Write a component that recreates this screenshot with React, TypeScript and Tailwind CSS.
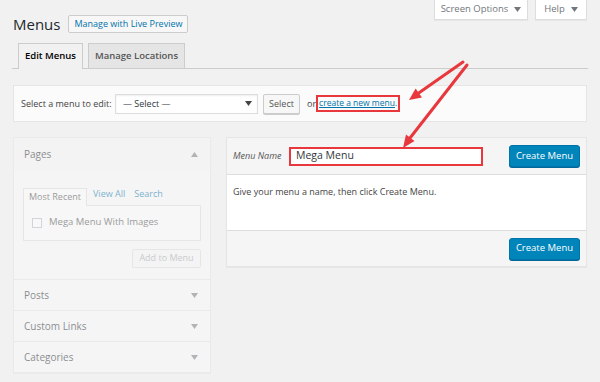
import { ReactNode } from "react";

function Caret({ up = false, className = "" }: { up?: boolean; className?: string }) {
  return (
    <svg width="7" height="5" viewBox="0 0 7 5" className={className}>
      {up ? <path d="M0 5 L3.5 0 L7 5 Z" fill="currentColor" /> : <path d="M0 0 L7 0 L3.5 5 Z" fill="currentColor" />}
    </svg>
  );
}

function MetaTab({ children, w }: { children: ReactNode; w: string }) {
  return (
    <div
      className={`flex h-[20px] ${w} items-center justify-center gap-[6px] border border-t-0 border-[#ddd] bg-white text-[9.5px] text-[#72777c] shadow-[0_1px_1px_rgba(0,0,0,0.04)]`}
    >
      {children}
    </div>
  );
}

function AccordionRow({ label }: { label: string }) {
  return (
    <div className="flex h-[31px] items-center justify-between border-t border-[#e5e5e5] bg-[#fafafa] pl-[10px] pr-[12px] text-[10px] text-[#23282d]">
      <span>{label}</span>
      <Caret className="text-[#72777c]" />
    </div>
  );
}

function BlueButton() {
  return (
    <button className="flex h-[22px] w-[71px] items-center justify-center rounded-[3px] border border-[#0073aa] bg-[#0085ba] text-[9.5px] text-white shadow-[0_1px_0_#006799]">
      Create Menu
    </button>
  );
}

export default function App() {
  return (
    <div
      className="relative h-[382px] w-[600px] overflow-hidden bg-[#f1f1f1] text-[#444]"
      style={{ fontFamily: '"Open Sans", "Noto Sans", sans-serif' }}
    >
      {/* Top bar */}
      <div className="flex items-start justify-between pl-[13px] pr-[13px]">
        <div className="mt-[14px] flex items-center gap-[8px]">
          <h1 className="text-[15px] leading-[20px] text-[#23282d]">Menus</h1>
          <button className="flex h-[18px] w-[120px] items-center justify-center rounded-[2px] border border-[#ccc] bg-[#f7f7f7] text-[9px] font-medium text-[#0073aa]">
            Manage with Live Preview
          </button>
        </div>
        <div className="flex gap-[7px]">
          <MetaTab w="w-[94px]">
            Screen Options <Caret />
          </MetaTab>
          <MetaTab w="w-[52px]">
            Help <Caret />
          </MetaTab>
        </div>
      </div>

      {/* Nav tabs */}
      <div className="mx-[12px] mt-[9px] flex items-end gap-[5px] border-b border-[#ccc] pl-[6px]">
        <div className="-mb-px flex h-[26px] w-[65px] items-center justify-center border border-b-0 border-[#ccc] bg-[#f1f1f1] text-[9.5px] font-semibold text-[#000]">
          Edit Menus
        </div>
        <div className="flex h-[25px] w-[97px] items-center justify-center border border-b-0 border-[#ccc] bg-[#e5e5e5] text-[9.5px] font-semibold text-[#555]">
          Manage Locations
        </div>
      </div>

      {/* Select menu */}
      <div className="mx-[13px] mt-[16px] flex h-[37px] items-center border border-[#e5e5e5] bg-[#fbfbfb] pl-[7px] text-[9px]">
        <span className="w-[94px] text-[#444]">Select a menu to edit:</span>
        <div className="flex h-[20px] w-[143px] items-center justify-between border border-[#ddd] bg-white pl-[7px] pr-[5px] text-[#32373c] shadow-[inset_0_1px_2px_rgba(0,0,0,0.07)]">
          <span>— Select —</span>
          <Caret className="text-[#444]" />
        </div>
        <button className="ml-[5px] flex h-[20px] w-[37px] items-center justify-center rounded-[2px] border border-[#ccc] bg-[#f7f7f7] text-[#555] shadow-[0_1px_0_#ccc]">
          Select
        </button>
        <span className="ml-[7px] text-[#444]">or</span>
        <span className="flex h-[17px] items-center border-2 border-[#e8383d] px-px text-[8.5px]">
          <span className="text-[#0073aa] underline">create a new menu</span>
          <span>.</span>
        </span>
      </div>

      {/* Columns */}
      <div className="mt-[15px] flex gap-[15px] px-[13px]">
        {/* Left (disabled) */}
        <div className="w-[198px] border border-[#e5e5e5] opacity-50 shadow-[0_1px_1px_rgba(0,0,0,0.04)]">
          <div className="flex h-[32px] items-center justify-between bg-[#f5f5f5] pl-[10px] pr-[12px] text-[10px] text-[#23282d]">
            <span>Pages</span>
            <Caret up className="text-[#72777c]" />
          </div>
          <div className="h-[109px] bg-[#fafafa] px-[9px] pt-[17px]">
            <div className="flex items-end text-[9px]">
              <div className="-mb-px flex h-[18px] w-[64px] items-center justify-center border border-b-0 border-[#ddd] bg-[#fdfdfd] text-[#444]">
                Most Recent
              </div>
              <span className="ml-[6px] pb-[4px] text-[#0073aa]">View All</span>
              <span className="ml-[9px] pb-[4px] text-[#0073aa]">Search</span>
            </div>
            <div className="flex h-[36px] items-center gap-[7px] border border-[#ddd] bg-[#fdfdfd] pl-[8px] text-[9.5px] text-[#444]">
              <span className="h-[10px] w-[10px] border border-[#b4b9be] bg-white" />
              <span>Mega Menu With Images</span>
            </div>
            <div className="mt-[8px] flex justify-end">
              <button className="flex h-[19px] w-[69px] items-center justify-center rounded-[2px] border border-[#ddd] bg-[#f7f7f7] text-[9px] text-[#a0a5aa]">
                Add to Menu
              </button>
            </div>
          </div>
          <AccordionRow label="Posts" />
          <AccordionRow label="Custom Links" />
          <AccordionRow label="Categories" />
        </div>

        {/* Right */}
        <div className="w-[361px] self-start border border-[#e5e5e5] bg-white shadow-[0_1px_1px_rgba(0,0,0,0.04)]">
          <div className="flex h-[37px] items-center border-b border-[#ddd] bg-[#f5f5f5] pl-[6px] pr-[6px]">
            <span className="w-[56px] text-[9px] italic text-[#555]">Menu Name</span>
            <div className="flex h-[19px] w-[194px] items-center border-2 border-[#e8383d] bg-white pl-[5px] text-[10.5px] text-[#32373c]">
              Mega Menu
            </div>
            <div className="ml-auto">
              <BlueButton />
            </div>
          </div>
          <div className="h-[55px] px-[6px] pt-[10px] text-[9px] text-[#444]">
            Give your menu a name, then click Create Menu.
          </div>
          <div className="flex h-[36px] items-center justify-end border-t border-[#ddd] bg-[#f5f5f5] pr-[6px]">
            <BlueButton />
          </div>
        </div>
      </div>

      {/* Annotation arrows */}
      <svg className="pointer-events-none absolute left-0 top-0" width="600" height="382">
        <g stroke="#e8383d" strokeWidth="3" strokeLinecap="round" fill="#e8383d">
          <line x1="463" y1="62" x2="418" y2="93.5" />
          <polygon points="409,100 422,97.6 415.6,88.6" stroke="none" />
          <line x1="467" y1="65" x2="410" y2="138" />
          <polygon points="403,148 414.5,141 406,134.4" stroke="none" />
        </g>
      </svg>
    </div>
  );
}
